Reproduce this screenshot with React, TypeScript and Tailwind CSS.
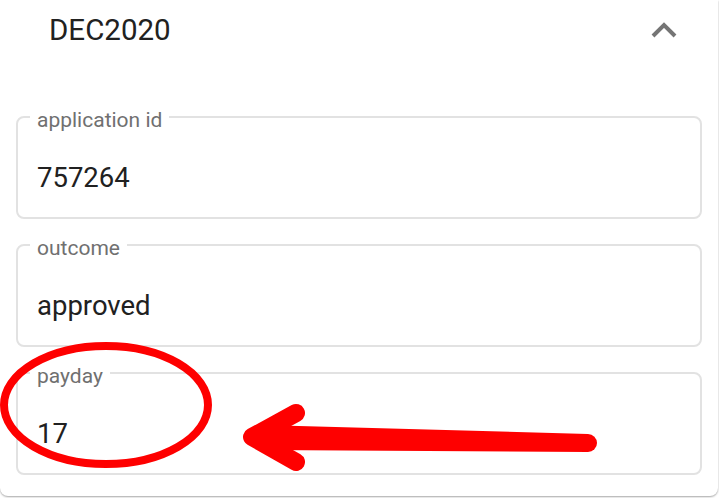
const FIELDS = [
  { label: 'application id', value: '757264' },
  { label: 'outcome', value: 'approved' },
  { label: 'payday', value: '17' },
];

function ChevronUp() {
  return (
    <svg width="28" height="18" viewBox="0 0 28 18" className="block">
      <polyline points="3,15 14,4 25,15" fill="none" stroke="#757575" strokeWidth="4" />
    </svg>
  );
}

function Annotation() {
  return (
    <svg width="719" height="498" viewBox="0 0 719 498" className="absolute left-0 top-0 pointer-events-none">
      <ellipse cx="106" cy="405" rx="102" ry="59" fill="none" stroke="#fe0000" strokeWidth="8" />
      <polygon points="262,425 588,434 588,452 262,450" fill="#fe0000" />
      <circle cx="588" cy="443" r="9" fill="#fe0000" />
      <polyline
        points="296,413 252,437 296,462"
        fill="none"
        stroke="#fe0000"
        strokeWidth="18"
        strokeLinecap="round"
        strokeLinejoin="round"
      />
    </svg>
  );
}

export default function App() {
  return (
    <div className="relative h-[498px] w-[719px] overflow-hidden bg-white" style={{ fontFamily: 'Roboto, "Noto Sans", sans-serif' }}>
      <div className="h-[496px] w-[718px] rounded-b-[8px] bg-white shadow-[0_1px_2px_rgba(0,0,0,0.35)]">
        <div className="flex h-[60px] items-center justify-between pl-[49px] pr-[40px]">
          <span className="text-[29.5px] leading-[34px] text-[#212121]">DEC2020</span>
          <ChevronUp />
        </div>
        <div className="flex flex-col gap-[14px] pt-[45px]">
          {FIELDS.map((f) => (
            <fieldset key={f.label} className="mx-[16px] h-[114px] rounded-[8px] border-2 border-[#e2e2e2] px-[12px]">
              <legend className="px-[7px] text-[21px] leading-[24px] text-[#707070]">
                <span className="relative top-[3px]">{f.label}</span>
              </legend>
              <div className="pl-[7px] pt-[33px] text-[27.5px] leading-[32px] text-[#212121]">{f.value}</div>
            </fieldset>
          ))}
        </div>
      </div>
      <Annotation />
    </div>
  );
}
